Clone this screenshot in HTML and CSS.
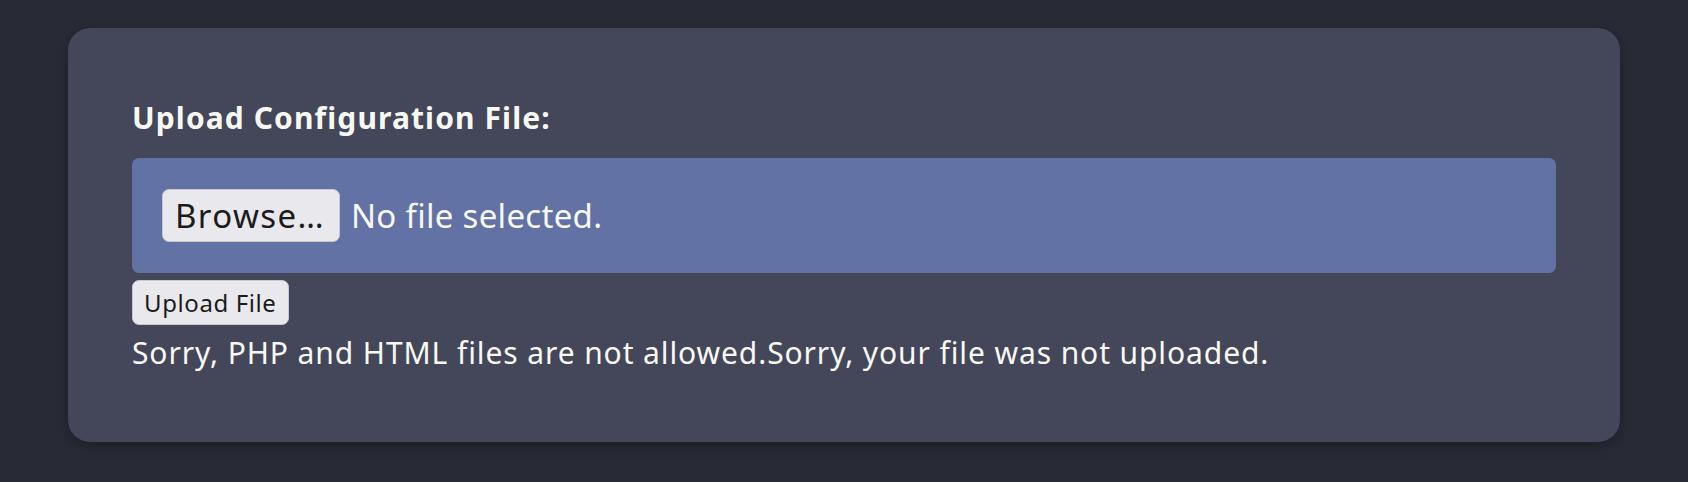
FILE: index.html
```html
<!DOCTYPE html>
<html lang="en">
<head>
<meta charset="utf-8">
<title>Upload Configuration File</title>
<link rel="stylesheet" href="styles.css">
</head>
<body>
<main class="page">
  <section class="card">
    <form class="upload-form">
      <label class="field-label" for="file">Upload Configuration File:</label>
      <div class="file-box">
        <button type="button" class="browse-btn" id="file">Browse…</button>
        <span class="file-status">No file selected.</span>
      </div>
      <div class="actions">
        <button type="button" class="upload-btn">Upload File</button>
      </div>
      <p class="message">Sorry, PHP and HTML files are not allowed.Sorry, your file was not uploaded.</p>
    </form>
  </section>
</main>
</body>
</html>
```

FILE: styles.css
```css
html, body {
  margin: 0;
  padding: 0;
  background: #282a36;
}

body {
  font-family: "Noto Sans", "Open Sans", sans-serif;
  color: #f8f8f2;
  font-size: 30px;
  line-height: 1.5;
}

.page {
  padding: 28px 68px;
}

.card {
  background: #44475a;
  border-radius: 22px;
  padding: 68px 64px 67px;
  box-shadow: 0 4px 14px rgba(0, 0, 0, 0.3);
}

.upload-form {
  display: flex;
  flex-direction: column;
  align-items: flex-start;
}

.field-label {
  font-weight: 700;
  font-size: 30px;
  letter-spacing: 1.1px;
  line-height: 44px;
  margin-bottom: 18px;
}

.file-box {
  align-self: stretch;
  display: flex;
  align-items: center;
  gap: 11px;
  background: #6272a4;
  border-radius: 7px;
  padding: 31px 30px;
}

.browse-btn,
.upload-btn {
  font-family: "Noto Sans", "Open Sans", sans-serif;
  background: #e9e9ed;
  color: #1b1b1b;
  border: 1px solid #c8c8d0;
  border-radius: 7px;
  cursor: pointer;
}

.browse-btn {
  font-size: 33px;
  letter-spacing: 1.4px;
  line-height: 45px;
  padding: 3px 14px 3px 12px;
}

.file-status {
  font-size: 33px;
  letter-spacing: 0.3px;
  line-height: 53px;
}

.actions {
  margin-top: 5px;
}

.upload-btn {
  font-size: 24px;
  letter-spacing: 0.6px;
  line-height: 33px;
  padding: 5px 12px 5px 11px;
}

.message {
  margin: 6px 0 0;
  font-size: 30px;
  letter-spacing: 0.9px;
  line-height: 44px;
}
```
